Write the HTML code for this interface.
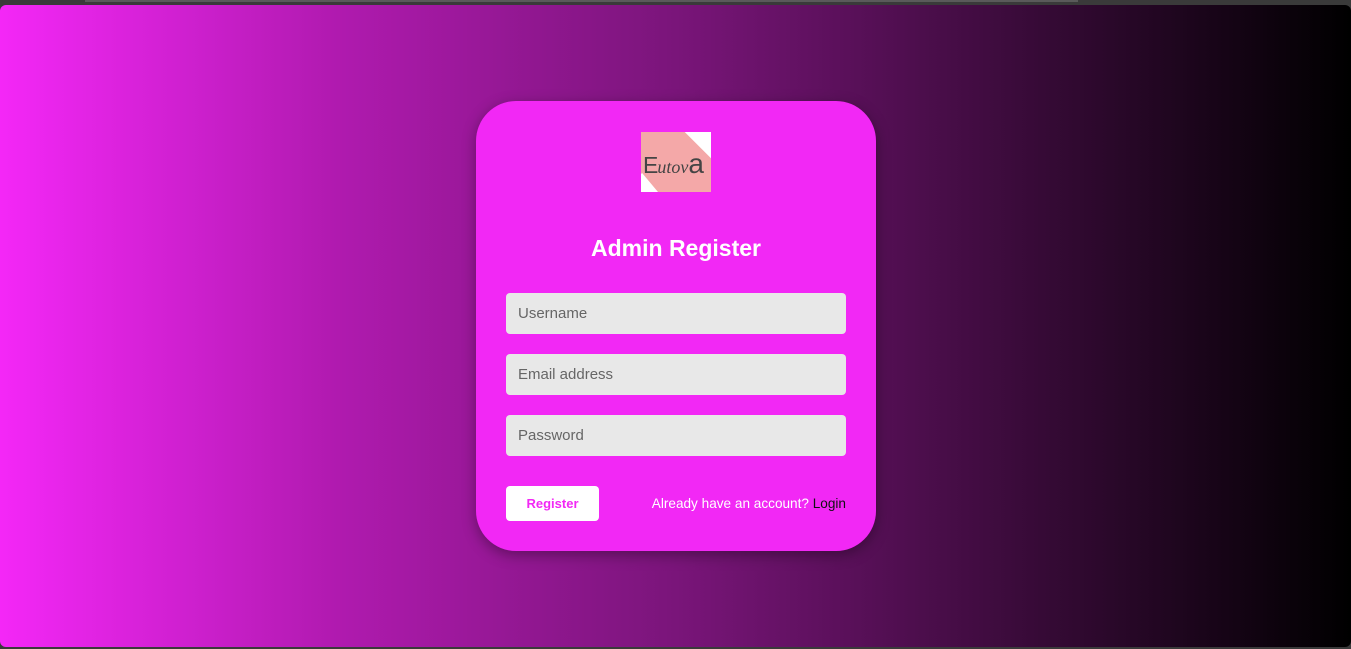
<!DOCTYPE html>
<html><head><style>
html,body{margin:0;padding:0;width:1351px;height:649px;background:#3a3a3a;overflow:hidden;font-family:"Liberation Sans",sans-serif}
.topline{position:absolute;left:85px;top:0;width:993px;height:2px;background:#5a5a5a}
.page{position:absolute;left:0;top:5px;width:1351px;height:642px;border-radius:6px;background:linear-gradient(90deg,#f427f7 0%,#b01aaf 25%,#7a157a 50%,#3b0b3b 75%,#000 100%)}
.card{position:absolute;left:476px;top:96px;width:400px;height:450px;border-radius:40px;background:#f228f5;box-shadow:0 4px 14px rgba(0,0,0,.35)}
.logo{position:absolute;left:165px;top:31px;width:70px;height:60px;background:#f4a8a8;overflow:hidden}
.logo .t1{position:absolute;right:-20px;top:-22px;width:40px;height:40px;background:#fff;transform:rotate(45deg)}
.logo .t2{position:absolute;left:-18px;bottom:-22px;width:34px;height:34px;background:#fff;transform:rotate(50deg)}
.logo .txt{position:absolute;left:2px;top:16px;font-size:23px;color:#444;white-space:nowrap;letter-spacing:-1px}
.logo i{font-family:"Liberation Serif",serif;font-size:18px;letter-spacing:0}
.logo em{font-style:normal;font-size:28px}
h1{position:absolute;left:0;right:0;top:134px;margin:0;text-align:center;color:#fff;font-size:23px;font-weight:bold}
.in{position:absolute;left:30px;width:340px;height:41px;border-radius:4px;background:#e8e8e8;box-sizing:border-box;padding-left:12px;line-height:41px;font-size:15px;color:#666}
.btn{position:absolute;left:30px;top:385px;width:93px;height:35px;background:#fff;border-radius:4px;text-align:center;line-height:35px;color:#f228f5;font-weight:bold;font-size:13px}
.acc{position:absolute;right:30px;top:395px;color:#fff;font-size:13.6px}
.acc b{color:#111;font-weight:normal}
</style></head><body>
<div class="topline"></div>
<div class="page">
<div class="card">
<div class="logo"><div class="t1"></div><div class="t2"></div><div class="txt">E<i>utov</i><em>a</em></div></div>
<h1>Admin Register</h1>
<div class="in" style="top:192px">Username</div>
<div class="in" style="top:253px">Email address</div>
<div class="in" style="top:314px">Password</div>
<div class="btn">Register</div>
<div class="acc">Already have an account? <b>Login</b></div>
</div>
</div>
</body></html>
